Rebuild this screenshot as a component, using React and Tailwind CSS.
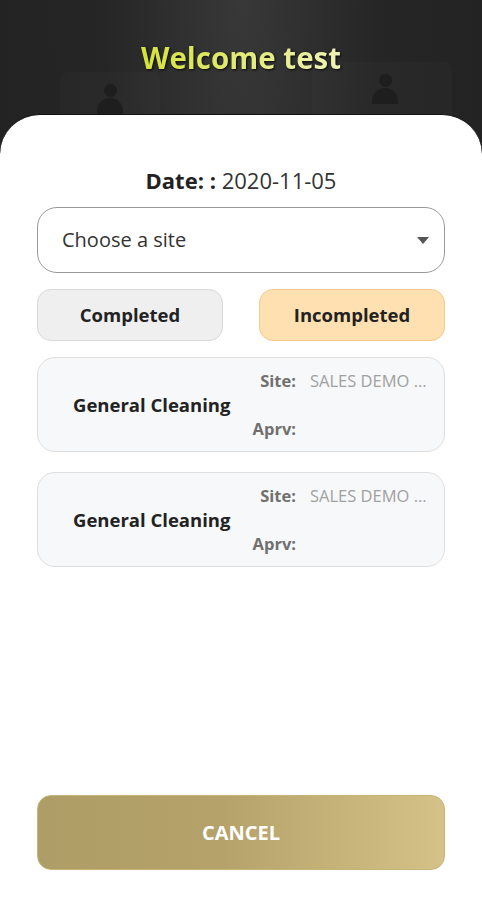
const TASKS = [
  { id: 1, name: "General Cleaning", site: "SALES DEMO ...", aprv: "" },
  { id: 2, name: "General Cleaning", site: "SALES DEMO ...", aprv: "" },
];

function Silhouette({ className }) {
  return (
    <div className={`absolute flex flex-col items-center ${className}`}>
      <div className="w-[13px] h-[13px] rounded-full bg-[#1e1e1e]" />
      <div className="w-[26px] h-[16px] rounded-t-full bg-[#1e1e1e] mt-[1px]" />
    </div>
  );
}

export default function App() {
  return (
    <div
      className="min-h-[900px] flex flex-col bg-[#222222] bg-[radial-gradient(ellipse_at_50%_0%,#383838_0%,#262626_40%,#202020_100%)]"
      style={{ fontFamily: '"Open Sans", "Noto Sans", sans-serif' }}
    >
      <header className="relative h-[114px] flex items-center justify-center">
        <div className="absolute left-[60px] top-[72px] w-[100px] h-[60px] rounded-lg bg-white/[0.015]" />
        <div className="absolute right-[30px] top-[62px] w-[140px] h-[70px] rounded-lg bg-white/[0.015]" />
        <Silhouette className="left-[97px] top-[84px]" />
        <Silhouette className="right-[84px] top-[74px]" />
        <h1
          className="relative text-[29.5px] font-bold leading-none mt-[2px] bg-[linear-gradient(90deg,#d4e33a,#eef2b6)] bg-clip-text text-transparent"
          style={{ filter: "drop-shadow(1px 1px 1px rgba(0,0,0,0.8))" }}
        >
          Welcome test
        </h1>
      </header>

      <main className="flex-1 flex flex-col bg-white rounded-t-[40px] border-t border-[#111] px-[37px] pt-[50px] pb-[30px]">
        <p className="text-center text-[22px] leading-[30px] text-[#222]">
          <span className="font-bold">Date: :</span> <span className="text-[#333]">2020-11-05</span>
        </p>

        <button className="mt-[12px] h-[66px] w-full flex items-center justify-between rounded-[20px] border border-[#9a9a9a] pl-[24px] pr-[15px] text-[20px] text-[#333]">
          <span>Choose a site</span>
          <svg width="12" height="7" viewBox="0 0 12 7" className="fill-[#555]">
            <path d="M0 0h12L6 7z" />
          </svg>
        </button>

        <div className="mt-[16px] flex justify-between">
          <button className="w-[186px] h-[52px] rounded-[14px] border border-[#d9d9d9] bg-[#efefef] text-[18.5px] font-bold text-[#222]">
            Completed
          </button>
          <button className="w-[186px] h-[52px] rounded-[14px] border border-[#f3c98c] bg-[#ffe0b0] text-[18.5px] font-bold text-[#222]">
            Incompleted
          </button>
        </div>

        <div className="mt-[16px] flex flex-col gap-[20px]">
          {TASKS.map((task) => (
            <div
              key={task.id}
              className="h-[95px] flex items-center rounded-[18px] border border-[#dedede] bg-[#f7f8f9] pl-[35px] pr-[15px]"
            >
              <h3 className="w-[167px] text-[18.5px] font-bold text-[#222] whitespace-nowrap">{task.name}</h3>
              <div className="flex-1 flex flex-col justify-between h-full pt-[11px] pb-[10px] text-[16.5px] leading-[24px]">
                <div className="flex">
                  <span className="w-[56px] text-right font-bold text-[#707070]">Site:</span>
                  <span className="ml-[14px] text-[#a0a0a0] whitespace-nowrap">{task.site}</span>
                </div>
                <div className="flex">
                  <span className="w-[56px] text-right font-bold text-[#707070]">Aprv:</span>
                  <span className="ml-[14px] text-[#a0a0a0]">{task.aprv}</span>
                </div>
              </div>
            </div>
          ))}
        </div>

        <button className="mt-auto h-[75px] w-full rounded-[14px] border border-[#c9b37a] bg-[linear-gradient(90deg,#ae9d66_0%,#b4a26a_45%,#d5c288_100%)] text-[20px] font-bold text-white">
          CANCEL
        </button>
      </main>
    </div>
  );
}
